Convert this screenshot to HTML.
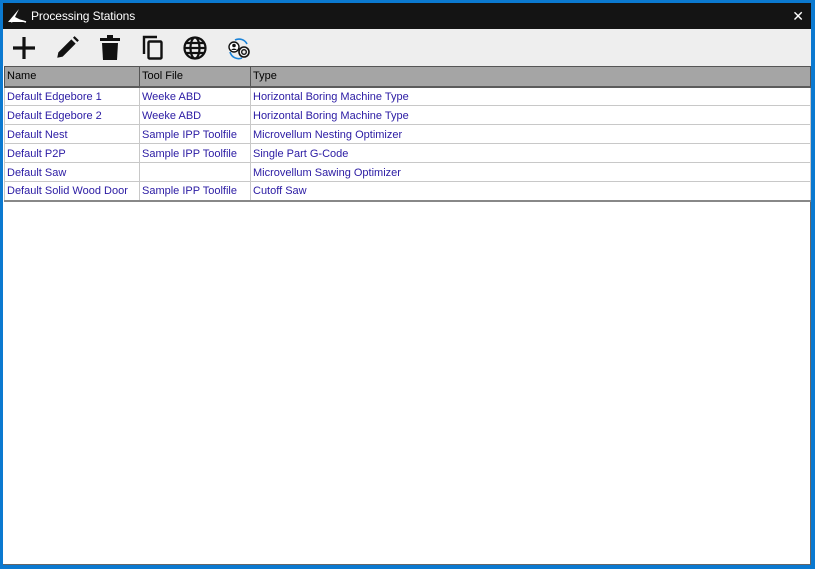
<!DOCTYPE html>
<html><head><style>
*{margin:0;padding:0;box-sizing:border-box}
body{width:815px;height:569px;background:#0b79d0;position:relative;overflow:hidden;font-family:"Liberation Sans",sans-serif}
#win{position:absolute;left:3px;top:3px;width:808px;height:562px;background:#fff;border-right:1px solid #666;border-bottom:1px solid #666}
#title{position:absolute;left:0;top:0;width:808px;height:26px;background:#141414;color:#fff;font-size:12px}
#title .t{position:absolute;left:28px;top:6px;letter-spacing:-0.1px}
#title .x{position:absolute;right:7px;top:5px;font-size:14px}
#tb{position:absolute;left:0;top:26px;width:808px;height:37px;background:#eeeeee}
#grid{position:absolute;left:1px;top:63px;width:807px;border-collapse:collapse;font-size:11px}
#grid td{height:19px;padding:1px 0 0 2px;border:1px solid #c8c8c8;color:#2a1aa3;white-space:nowrap}
#grid tr.h td{background:#a5a5a5;color:#000;border:1px solid #555;border-bottom:2px solid #5b5b5b;height:20px;padding-top:0}
#grid tr:nth-child(2) td{border-top:2px solid #b8c8e0}
#grid tr:last-child td{border-bottom:2px solid #888}
</style></head><body>
<div id="win">
<div id="title">
<svg style="position:absolute;left:4px;top:5px" width="20" height="16" viewBox="0 0 20 16"><path d="M1 14 L12 1 L8 9 L18 14 Z" fill="#fff"/><path d="M4 14 C9 11 13 12 19 14" stroke="#fff" fill="none" stroke-width="1.5"/></svg>
<span class="t">Processing Stations</span><span class="x">✕</span></div>
<div id="tb">
<svg style="position:absolute;left:9px;top:7px" width="24" height="24"><path d="M12 1V23M1 12H23" stroke="#111" stroke-width="3.2"/></svg>
<svg style="position:absolute;left:51px;top:6px" width="26" height="26" viewBox="0 0 24 24"><path d="M3 21 L4 16 L16 4 L20 8 L8 20 Z M17.5 2.5 L19 1 L23 5 L21.5 6.5 Z" fill="#111"/></svg>
<svg style="position:absolute;left:96px;top:6px" width="22" height="26" viewBox="0 0 22 26"><rect x="1" y="3" width="20" height="3" fill="#111"/><rect x="8" y="0" width="6" height="3" fill="#111"/><path d="M3 8H19L18 25H4Z" fill="#111"/></svg>
<svg style="position:absolute;left:138px;top:6px" width="26" height="26" viewBox="0 0 26 26"><path d="M3 19V2H16" stroke="#111" stroke-width="2.4" fill="none"/><rect x="7.5" y="6.5" width="13" height="17" rx="1" stroke="#111" stroke-width="2.4" fill="none"/></svg>
<svg style="position:absolute;left:180px;top:7px" width="24" height="24" viewBox="0 0 24 24" fill="none" stroke="#111" stroke-width="2.2"><circle cx="12" cy="12" r="10.5"/><ellipse cx="12" cy="12" rx="4.5" ry="10.5"/><path d="M1.5 12H22.5M3 7H21M3 17H21"/></svg>
<svg style="position:absolute;left:222px;top:9px" width="28" height="22" viewBox="0 0 28 22"><path d="M10 2 A9 9 0 0 1 22 6" stroke="#1b83d8" stroke-width="1.6" fill="none"/><path d="M5 14 A9 9 0 0 0 17 20" stroke="#1b83d8" stroke-width="1.6" fill="none"/><circle cx="9" cy="9" r="5" fill="#fff" stroke="#111" stroke-width="1.4"/><circle cx="9" cy="7.5" r="1.8" fill="#111"/><path d="M6 12 Q9 9 12 12" fill="#111"/><circle cx="19" cy="14" r="5" fill="none" stroke="#111" stroke-width="1.6"/><circle cx="19" cy="14" r="2.3" fill="none" stroke="#111" stroke-width="1.4"/></svg>
</div>
<table id="grid">
<tr class="h"><td style="width:135px">Name</td><td style="width:111px">Tool File</td><td>Type</td></tr>
<tr><td>Default Edgebore 1</td><td>Weeke ABD</td><td>Horizontal Boring Machine Type</td></tr>
<tr><td>Default Edgebore 2</td><td>Weeke ABD</td><td>Horizontal Boring Machine Type</td></tr>
<tr><td>Default Nest</td><td>Sample IPP Toolfile</td><td>Microvellum Nesting Optimizer</td></tr>
<tr><td>Default P2P</td><td>Sample IPP Toolfile</td><td>Single Part G-Code</td></tr>
<tr><td>Default Saw</td><td></td><td>Microvellum Sawing Optimizer</td></tr>
<tr><td>Default Solid Wood Door</td><td>Sample IPP Toolfile</td><td>Cutoff Saw</td></tr>
</table>
</div>
</body></html>
